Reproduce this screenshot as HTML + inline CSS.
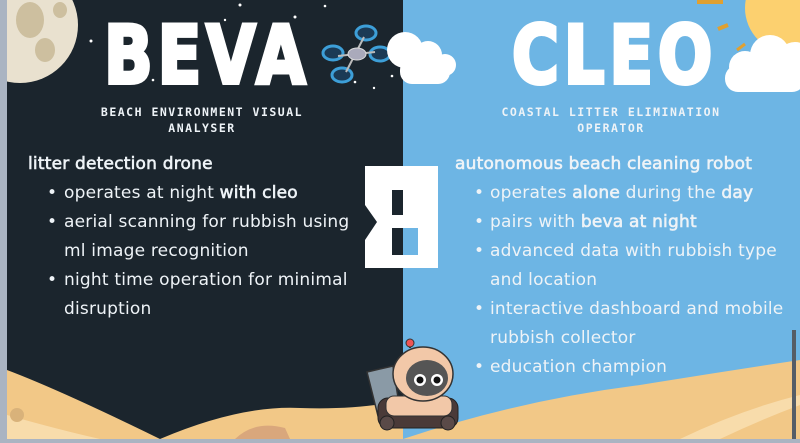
<!DOCTYPE html>
<html><head><meta charset="utf-8"><style>
html,body{margin:0;padding:0;width:800px;height:443px;overflow:hidden;background:#aab4c2}
.s{position:absolute;left:0;top:0}
.t{position:absolute;font-family:"DejaVu Sans","Liberation Sans",sans-serif;font-size:17px;color:#eef3f7;white-space:nowrap;letter-spacing:0.2px}
.h{-webkit-text-stroke:0.6px #eef3f7}
b{font-weight:normal;-webkit-text-stroke:0.6px #eef3f7}
.sub{position:absolute;font-family:"DejaVu Sans Mono","Liberation Mono",monospace;font-size:11.5px;font-weight:bold;color:#eef3f7;letter-spacing:1.5px;text-align:center;line-height:16px;width:300px}
.ti{position:absolute;font-family:"DejaVu Sans","Liberation Sans",sans-serif;font-weight:bold;font-size:80px;color:#fff;transform-origin:0 0;transform:scaleX(0.8);line-height:1;letter-spacing:6px;-webkit-text-stroke:4px #fff}
.dot{position:absolute;color:#eef3f7;font-size:17px;font-family:"DejaVu Sans",sans-serif}
</style></head><body>
<svg class="s" width="800" height="443" viewBox="0 0 800 443">
<rect x="7" y="0" width="396" height="439" fill="#1b252d"/>
<rect x="403" y="0" width="397" height="439" fill="#6db5e4"/>
<circle cx="20" cy="25" r="58" fill="#e9e1cf"/>
<ellipse cx="30" cy="20" rx="14" ry="18" fill="#cdbf9f"/>
<ellipse cx="45" cy="50" rx="10" ry="12" fill="#cdbf9f"/>
<ellipse cx="60" cy="10" rx="7" ry="8" fill="#cdbf9f"/>
<rect x="0" y="0" width="7" height="443" fill="#aab4c2"/>
<g fill="#fff"><circle cx="240" cy="5" r="1.5"/><circle cx="325" cy="6" r="1.3"/><circle cx="295" cy="17" r="1.5"/><circle cx="91" cy="41" r="1.5"/><circle cx="153" cy="80" r="1.3"/><circle cx="355" cy="82" r="1.3"/><circle cx="392" cy="76" r="1.3"/><circle cx="374" cy="88" r="1.2"/><circle cx="225" cy="20" r="1.2"/></g>
<g stroke="#3d9fd8" stroke-width="3" fill="#1b3a55">
<ellipse cx="333" cy="53" rx="10" ry="7"/><ellipse cx="366" cy="33" rx="10" ry="7"/><ellipse cx="380" cy="54" rx="10" ry="7"/><ellipse cx="342" cy="75" rx="10" ry="7"/></g>
<g stroke="#bbb" stroke-width="2"><line x1="338" y1="56" x2="375" y2="52"/><line x1="364" y1="37" x2="346" y2="72"/></g>
<ellipse cx="357" cy="54" rx="9" ry="6" fill="#aab" stroke="#ddd"/>
<circle cx="790" cy="8" r="45" fill="#fcd06f"/>
<rect x="697" y="0" width="26" height="4" fill="#e0a030"/>
<line x1="718" y1="29" x2="728" y2="25" stroke="#e0a030" stroke-width="4"/>
<line x1="737" y1="50" x2="745" y2="44" stroke="#e0a030" stroke-width="3"/>
<g fill="#fff">
<circle cx="745" cy="67" r="16"/><circle cx="770" cy="55" r="20"/><circle cx="795" cy="60" r="18"/><rect x="725" y="65" width="80" height="27" rx="13"/>
<circle cx="405" cy="50" r="18"/><circle cx="428" cy="55" r="14"/><circle cx="445" cy="65" r="11"/><rect x="400" y="58" width="50" height="26" rx="12"/>
</g>
<path d="M7 370 Q60 390 160 439 L7 439Z" fill="#f2c887"/>
<path d="M160 439 Q240 405 300 408 Q360 410 403 400 L403 439Z" fill="#f2c887"/>
<path d="M7 415 Q60 430 100 439 L7 439Z" fill="#f8dcab"/>
<circle cx="17" cy="415" r="7" fill="#d9b27a"/>
<path d="M235 439 Q255 420 285 428 L290 439Z" fill="#d9a77c"/>
<path d="M403 439 Q520 400 640 385 Q720 372 800 360 L800 439Z" fill="#f2c887"/>
<path d="M680 439 Q740 410 800 395 L800 405 Q760 420 720 439Z" fill="#f8dcab"/>
<rect x="792" y="330" width="4" height="109" fill="#555d66"/>
<rect x="0" y="439" width="800" height="4" fill="#aab4c2"/>
<path d="M365 166 H438 V268 H365 V240 L377 222 L365 205Z" fill="#fff"/>
<rect x="392" y="190" width="11" height="25" fill="#1b252d"/>
<rect x="392" y="228" width="11" height="27" fill="#1b252d"/>
<rect x="403" y="228" width="15" height="27" fill="#6db5e4"/>
<path d="M367 372 L393 366 L400 410 L378 416Z" fill="#8a9aa6" stroke="#333" stroke-width="1.5"/>
<rect x="378" y="398" width="80" height="30" rx="10" fill="#4a3a38" stroke="#222"/>
<circle cx="387" cy="423" r="7" fill="#5a4a48" stroke="#222"/><circle cx="448" cy="423" r="7" fill="#5a4a48" stroke="#222"/>
<rect x="386" y="396" width="66" height="20" rx="8" fill="#f2c8a8" stroke="#333"/>
<ellipse cx="423" cy="374" rx="30" ry="27" fill="#f2c8a8" stroke="#333" stroke-width="1.5"/>
<ellipse cx="427" cy="378" rx="21" ry="18" fill="#555"/>
<circle cx="420" cy="380" r="6" fill="#fff"/><circle cx="420" cy="380" r="3.5" fill="#111"/>
<circle cx="437" cy="380" r="6" fill="#fff"/><circle cx="437" cy="380" r="3.5" fill="#111"/>
<line x1="410" y1="348" x2="410" y2="340" stroke="#333" stroke-width="2"/><circle cx="410" cy="343" r="4" fill="#e55" stroke="#333"/>
</svg>

<div class="ti" style="left:104px;top:16px">BEVA</div>
<div class="ti" style="left:512px;top:16px">CLEO</div>
<div class="sub" style="left:52px;top:104px">BEACH ENVIRONMENT VISUAL<br>ANALYSER</div>
<div class="sub" style="left:461px;top:104px">COASTAL LITTER ELIMINATION<br>OPERATOR</div>

<div class="t h" style="left:28px;top:154px">litter detection drone</div>
<div class="dot" style="left:47px;top:183px">•</div><div class="t" style="left:64px;top:183px">operates at night <b>with cleo</b></div>
<div class="dot" style="left:47px;top:212px">•</div><div class="t" style="left:64px;top:212px">aerial scanning for rubbish using</div>
<div class="t" style="left:64px;top:241px">ml image recognition</div>
<div class="dot" style="left:47px;top:270px">•</div><div class="t" style="left:64px;top:270px">night time operation for minimal</div>
<div class="t" style="left:64px;top:299px">disruption</div>

<div class="t h" style="left:455px;top:154px">autonomous beach cleaning robot</div>
<div class="dot" style="left:474px;top:183px">•</div><div class="t" style="left:490px;top:183px">operates <b>alone</b> during the <b>day</b></div>
<div class="dot" style="left:474px;top:212px">•</div><div class="t" style="left:490px;top:212px">pairs with <b>beva at night</b></div>
<div class="dot" style="left:474px;top:241px">•</div><div class="t" style="left:490px;top:241px">advanced data with rubbish type</div>
<div class="t" style="left:490px;top:270px">and location</div>
<div class="dot" style="left:474px;top:299px">•</div><div class="t" style="left:490px;top:299px">interactive dashboard and mobile</div>
<div class="t" style="left:490px;top:328px">rubbish collector</div>
<div class="dot" style="left:474px;top:357px">•</div><div class="t" style="left:490px;top:357px">education champion</div>
</body></html>
